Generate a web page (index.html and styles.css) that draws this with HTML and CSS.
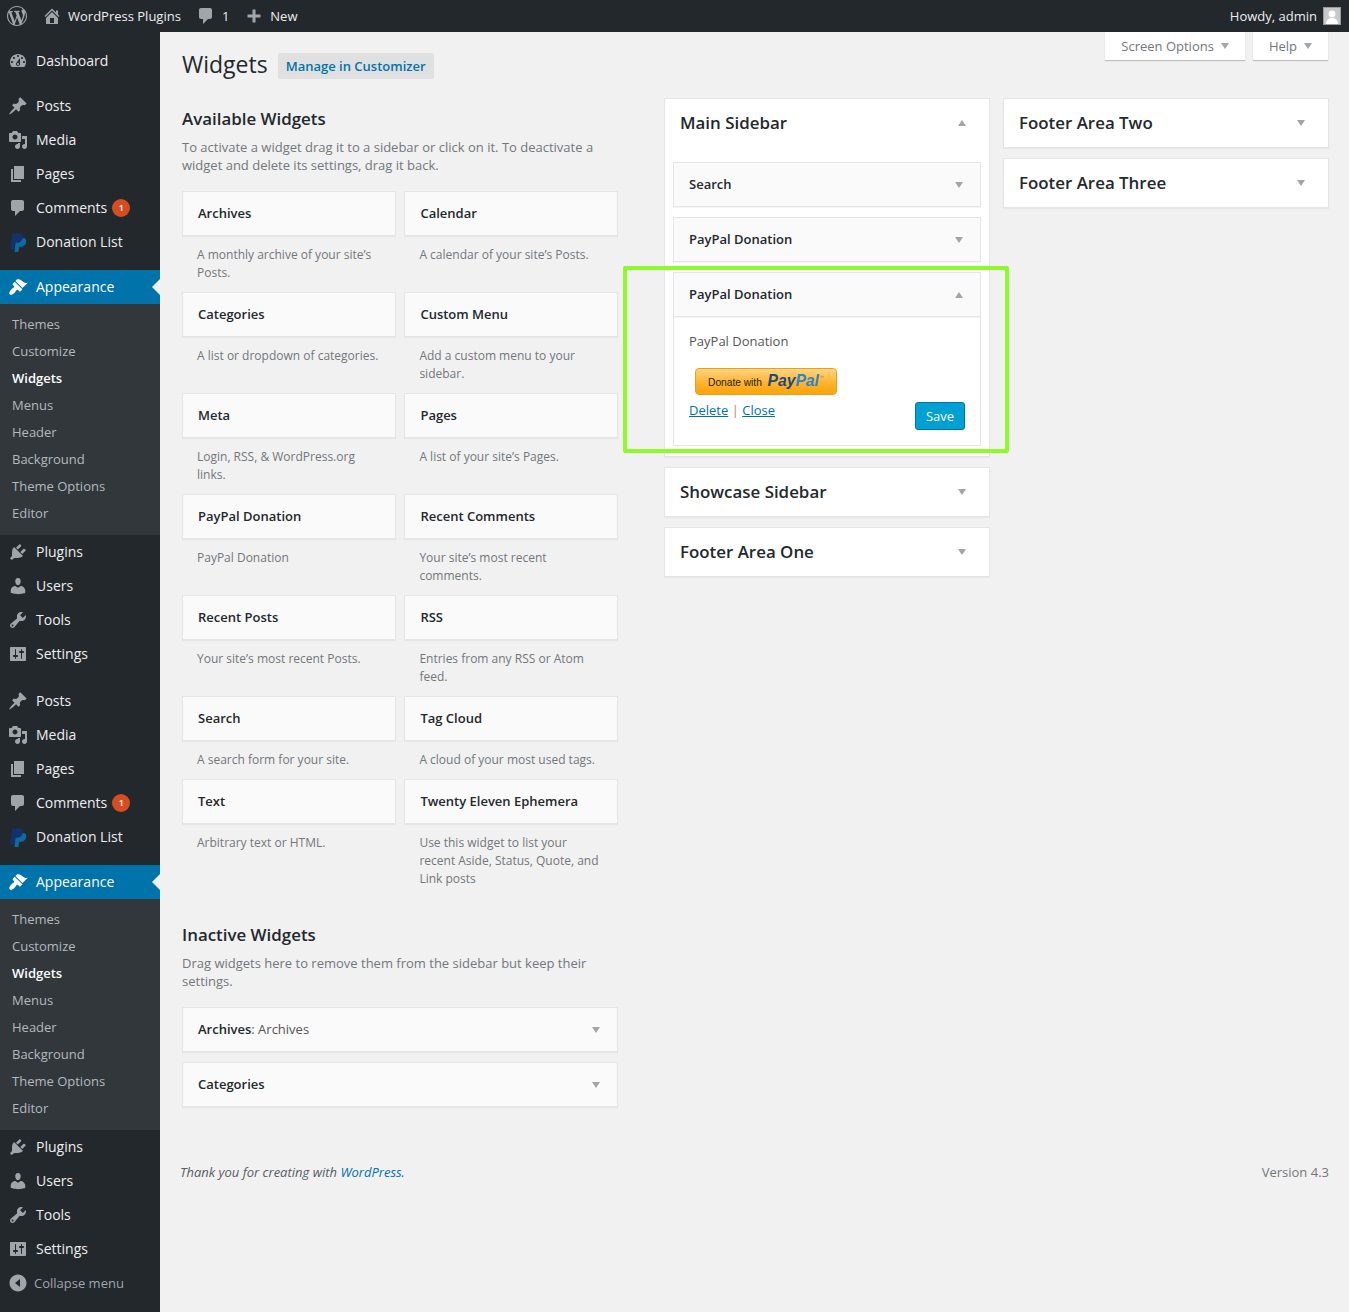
FILE: index.html
```html
<!DOCTYPE html>
<html lang="en">
<head>
    <meta charset="UTF-8">
    <meta name="viewport" content="width=device-width, initial-scale=1.0">
    <title>Widgets</title>
    <link rel="stylesheet" href="styles.css">
</head>
<body>
    <!-- Icon set -->
    <svg class="icon-defs" width="0" height="0">
        <symbol id="i-wp" viewBox="0 0 20 20"><path fill-rule="evenodd" d="M20 10c0-5.51-4.49-10-10-10C4.48 0 0 4.49 0 10c0 5.52 4.48 10 10 10 5.51 0 10-4.48 10-10zM7.78 15.37L4.37 6.22c.55-.02 1.17-.08 1.17-.08.5-.06.44-1.13-.06-1.11 0 0-1.45.11-2.37.11-.18 0-.37 0-.58-.01C4.12 2.69 6.87 1.11 10 1.11c2.33 0 4.45.87 6.05 2.34-.68-.11-1.65.39-1.65 1.58 0 .74.45 1.36.9 2.1.35.61.55 1.36.55 2.46 0 1.49-1.4 5-1.4 5l-3.03-8.37c.54-.02.82-.17.82-.17.5-.05.44-1.25-.06-1.22 0 0-1.44.12-2.38.12-.87 0-2.33-.12-2.33-.12-.5-.03-.56 1.2-.06 1.22l.92.08 1.26 3.41zM17.41 10c.24-.64.74-1.87.43-4.25.7 1.29 1.05 2.71 1.05 4.25 0 3.29-1.73 6.24-4.4 7.78.97-2.59 1.94-5.2 2.92-7.78zM6.1 18.09C3.12 16.65 1.11 13.53 1.11 10c0-1.3.23-2.48.72-3.59C3.25 10.3 4.67 14.2 6.1 18.09zm4.03-6.63l2.58 6.98c-.86.29-1.76.45-2.71.45-.79 0-1.57-.11-2.29-.33.81-2.38 1.62-4.74 2.42-7.1z"/></symbol>
        <symbol id="i-home" viewBox="0 0 20 20"><path fill-rule="evenodd" d="M16 8.5l1.53 1.53-1.06 1.06L10 4.62l-6.47 6.47-1.06-1.06L10 2.5l4 4v-2h2v4zm-6-2.46l6 5.99V18H4v-5.97zM12 17v-5H8v5h4z"/></symbol>
        <symbol id="i-comment" viewBox="0 0 20 20"><path d="M5 2h9c1.1 0 2 .9 2 2v7c0 1.1-.9 2-2 2h-2l-5 5v-5H5c-1.1 0-2-.9-2-2V4c0-1.1.9-2 2-2z"/></symbol>
        <symbol id="i-plus" viewBox="0 0 20 20"><path d="M17 7v3h-5v5H9v-5H4V7h5V2h3v5h5z" transform="translate(-.5 1.5)"/></symbol>
        <symbol id="i-dashboard" viewBox="0 0 20 20"><path fill-rule="evenodd" d="M3.76 16h12.48c1.1-1.37 1.76-3.11 1.76-5 0-4.42-3.58-8-8-8s-8 3.58-8 8c0 1.89.66 3.63 1.76 5zM10 4c.55 0 1 .45 1 1s-.45 1-1 1-1-.45-1-1 .45-1 1-1zM6 6c.55 0 1 .45 1 1s-.45 1-1 1-1-.45-1-1 .45-1 1-1zm8 0c.55 0 1 .45 1 1s-.45 1-1 1-1-.45-1-1 .45-1 1-1zm-5.37 5.55L12 7v6c0 1.1-.9 2-2 2s-2-.9-2-2c0-.57.24-1.08.63-1.45zM4 10c.55 0 1 .45 1 1s-.45 1-1 1-1-.45-1-1 .45-1 1-1zm12 0c.55 0 1 .45 1 1s-.45 1-1 1-1-.45-1-1 .45-1 1-1zm-5 3c0-.55-.45-1-1-1s-1 .45-1 1 .45 1 1 1 1-.45 1-1z"/></symbol>
        <symbol id="i-post" viewBox="0 0 20 20"><path d="M10.44 3.02l1.82-1.82 6.36 6.35-1.83 1.82c-1.05-.68-2.48-.57-3.41.36l-.75.75c-.92.93-1.04 2.35-.35 3.41l-1.83 1.82-2.41-2.41-2.8 2.79c-.42.42-3.38 2.71-3.8 2.29s1.86-3.39 2.28-3.81l2.79-2.79L4.1 9.36l1.83-1.82c1.05.69 2.48.57 3.4-.36l.75-.75c.93-.92 1.05-2.35.36-3.41z"/></symbol>
        <symbol id="i-media" viewBox="0 0 20 20"><path fill-rule="evenodd" d="M13 11V4c0-.55-.45-1-1-1h-1.67L9 1H5L3.67 3H2c-.55 0-1 .45-1 1v7c0 .55.45 1 1 1h10c.55 0 1-.45 1-1zM7 4.5c1.38 0 2.5 1.12 2.5 2.5S8.38 9.5 7 9.5 4.5 8.38 4.5 7 5.62 4.5 7 4.5zM14 6h5v10.5c0 1.38-1.12 2.5-2.5 2.5S14 17.88 14 16.5s1.12-2.5 2.5-2.5c.17 0 .34.02.5.05V9h-3V6zm-4 8.05V13h2v3.5c0 1.38-1.12 2.5-2.5 2.5S7 17.88 7 16.5 8.12 14 9.5 14c.17 0 .34.02.5.05z"/></symbol>
        <symbol id="i-page" viewBox="0 0 20 20"><path d="M6 15V2h10v13H6zm-1 1h8v2H3V5h2v11z"/></symbol>
        <symbol id="i-paypal" viewBox="0 0 20 20"><path fill="#0e6aa3" d="M8 6h6.800c2.400 0 3.900 1.600 3.400 4.200-.6 2.800-2.700 4.500-5.400 4.500h-1.600l-.8 5.300H6.500z"/><path fill="#12326e" d="M4.500 1.500h6.500c3 0 4.400 1.800 3.800 4.500-.7 3-2.900 4.800-5.800 4.800H7.400L6.300 17H1.800z"/></symbol>
        <symbol id="i-brush" viewBox="0 0 20 20"><path d="M14.480 11.060L7.410 3.990l1.500-1.500c.5-.56 2.300-.47 3.510.32 1.210.8 1.430 1.280 2.910 2.100 1.180.64 2.450 1.260 4.450.85zM14.360 12.360L6.700 4.700 4.930 6.470c-.39.39-.39 1.020 0 1.410l1.060 1.060c.39.39.39 1.030 0 1.420-.6.6-1.430 1.110-2.210 1.690-.35.26-.7.53-1.010.84-1.400 1.400-2 3.400-1 4.400 1 1 3 .4 4.400-1 .31-.31.58-.66.84-1.010.58-.78 1.090-1.610 1.690-2.210.39-.39 1.030-.39 1.420 0l1.060 1.060c.39.39 1.020.39 1.410 0z"/></symbol>
        <symbol id="i-plugin" viewBox="0 0 20 20"><path d="M13.110 4.360L9.870 7.600 8 5.730l3.240-3.240c.35-.34 1.050-.2 1.560.32.52.51.66 1.210.31 1.550zm-8 1.770l.91-1.120 9.010 9.010-1.190.84c-.71.71-2.630 1.160-3.820 1.160H6.140L4.900 17.260c-.59.59-1.540.59-2.120 0-.59-.58-.59-1.530 0-2.120l1.240-1.240v-3.880c0-1.130.4-3.190 1.090-3.890zm7.260 3.970l3.240-3.240c.34-.35 1.040-.21 1.550.31.52.51.66 1.210.31 1.550l-3.240 3.250z"/></symbol>
        <symbol id="i-users" viewBox="0 0 20 20"><path d="M10 9.250c-2.270 0-2.730-3.440-2.730-3.440C7 4.020 7.820 2 9.970 2c2.160 0 2.980 2.020 2.710 3.810 0 0-.41 3.440-2.680 3.440zm0 2.570L12.720 10c2.390 0 4.520 2.330 4.520 4.530v2.490s-3.650 1.130-7.240 1.130c-3.650 0-7.240-1.130-7.240-1.130v-2.490c0-2.250 1.940-4.480 4.470-4.480z"/></symbol>
        <symbol id="i-tools" viewBox="0 0 20 20"><path fill-rule="evenodd" d="M16.680 9.770c-1.340 1.340-3.300 1.670-4.950.99l-5.410 6.520c-.99.99-2.590.99-3.580 0s-.99-2.590 0-3.570l6.520-5.420c-.68-1.650-.35-3.610.99-4.950 1.280-1.280 3.120-1.620 4.720-1.060l-2.890 2.890 2.820 2.820 2.860-2.870c.53 1.580.18 3.390-1.080 4.650zM3.810 16.210c.4.39 1.040.39 1.430 0 .4-.4.4-1.040 0-1.430-.39-.4-1.030-.4-1.430 0-.39.39-.39 1.030 0 1.430z"/></symbol>
        <symbol id="i-settings" viewBox="0 0 20 20"><path fill-rule="evenodd" d="M18 16V4c0-.55-.45-1-1-1H3c-.55 0-1 .45-1 1v12c0 .55.45 1 1 1h14c.55 0 1-.45 1-1zM8 11h1c.55 0 1 .45 1 1s-.45 1-1 1H8v1.500c0 .28-.22.5-.5.5s-.5-.22-.5-.5V13H6c-.55 0-1-.45-1-1s.45-1 1-1h1V5.500c0-.28.22-.5.5-.5s.5.22.5.5V11zm5-2h-1c-.55 0-1-.45-1-1s.45-1 1-1h1V5.500c0-.28.22-.5.5-.5s.5.22.5.5V7h1c.55 0 1 .45 1 1s-.45 1-1 1h-1v5.500c0 .28-.22.5-.5.5s-.5-.22-.5-.5V9z"/></symbol>
        <symbol id="i-collapse" viewBox="0 0 20 20"><path fill-rule="evenodd" d="M10 1.500c4.700 0 8.500 3.800 8.500 8.500s-3.800 8.500-8.500 8.500S1.500 14.700 1.500 10 5.300 1.500 10 1.500zM12 14V6l-5 4z"/></symbol>
        <symbol id="i-avatar" viewBox="0 0 16 16"><rect width="16" height="16" fill="#c9c9c9"/><circle cx="8" cy="6" r="3.400" fill="#fff"/><path fill="#fff" d="M2 16c.3-4 2.500-6 6-6s5.700 2 6 6z"/></symbol>
    </svg>

    <!-- Admin bar -->
    <div class="adminbar">
        <div class="bar-left">
            <svg class="bar-wp"><use href="#i-wp"/></svg>
            <span class="bar-item"><svg class="bar-icon"><use href="#i-home"/></svg>WordPress Plugins</span>
            <span class="bar-item"><svg class="bar-icon"><use href="#i-comment"/></svg>1</span>
            <span class="bar-item"><svg class="bar-icon"><use href="#i-plus"/></svg>New</span>
        </div>
        <div class="bar-right">Howdy, admin <svg class="bar-avatar"><use href="#i-avatar"/></svg></div>
    </div>

    <div class="layout">
        <!-- Side menu -->
        <nav class="sidemenu">
            <a class="menu-item first"><svg class="menu-icon"><use href="#i-dashboard"/></svg>Dashboard</a>
            <div class="menu-sep"></div>
            <a class="menu-item"><svg class="menu-icon"><use href="#i-post"/></svg>Posts</a>
            <a class="menu-item"><svg class="menu-icon"><use href="#i-media"/></svg>Media</a>
            <a class="menu-item"><svg class="menu-icon"><use href="#i-page"/></svg>Pages</a>
            <a class="menu-item"><svg class="menu-icon"><use href="#i-comment"/></svg>Comments <span class="badge">1</span></a>
            <a class="menu-item"><svg class="menu-icon"><use href="#i-paypal"/></svg>Donation List</a>
            <div class="menu-sep"></div>
            <a class="menu-item current"><svg class="menu-icon"><use href="#i-brush"/></svg>Appearance</a>
            <ul class="submenu">
                <li>Themes</li>
                <li>Customize</li>
                <li class="on">Widgets</li>
                <li>Menus</li>
                <li>Header</li>
                <li>Background</li>
                <li>Theme Options</li>
                <li>Editor</li>
            </ul>
            <a class="menu-item"><svg class="menu-icon"><use href="#i-plugin"/></svg>Plugins</a>
            <a class="menu-item"><svg class="menu-icon"><use href="#i-users"/></svg>Users</a>
            <a class="menu-item"><svg class="menu-icon"><use href="#i-tools"/></svg>Tools</a>
            <a class="menu-item"><svg class="menu-icon"><use href="#i-settings"/></svg>Settings</a>
            <div class="menu-sep wide"></div>
            <a class="menu-item"><svg class="menu-icon"><use href="#i-post"/></svg>Posts</a>
            <a class="menu-item"><svg class="menu-icon"><use href="#i-media"/></svg>Media</a>
            <a class="menu-item"><svg class="menu-icon"><use href="#i-page"/></svg>Pages</a>
            <a class="menu-item"><svg class="menu-icon"><use href="#i-comment"/></svg>Comments <span class="badge">1</span></a>
            <a class="menu-item"><svg class="menu-icon"><use href="#i-paypal"/></svg>Donation List</a>
            <div class="menu-sep"></div>
            <a class="menu-item current"><svg class="menu-icon"><use href="#i-brush"/></svg>Appearance</a>
            <ul class="submenu">
                <li>Themes</li>
                <li>Customize</li>
                <li class="on">Widgets</li>
                <li>Menus</li>
                <li>Header</li>
                <li>Background</li>
                <li>Theme Options</li>
                <li>Editor</li>
            </ul>
            <a class="menu-item"><svg class="menu-icon"><use href="#i-plugin"/></svg>Plugins</a>
            <a class="menu-item"><svg class="menu-icon"><use href="#i-users"/></svg>Users</a>
            <a class="menu-item"><svg class="menu-icon"><use href="#i-tools"/></svg>Tools</a>
            <a class="menu-item"><svg class="menu-icon"><use href="#i-settings"/></svg>Settings</a>
            <a class="menu-collapse"><svg class="menu-icon"><use href="#i-collapse"/></svg>Collapse menu</a>
        </nav>

        <!-- Page content -->
        <main class="content">
            <div class="screen-tabs">
                <span class="screen-tab">Screen Options<i class="arrow down"></i></span>
                <span class="screen-tab">Help<i class="arrow down"></i></span>
            </div>

            <div class="page-title">
                <h1>Widgets</h1>
                <span class="title-action">Manage in Customizer</span>
            </div>

            <div class="columns">
                <div class="col-available">
                    <h2>Available Widgets</h2>
                    <p class="intro">To activate a widget drag it to a sidebar or click on it. To deactivate a widget and delete its settings, drag it back.</p>
                    <div class="widget-grid">
                        <div class="avail"><div class="tile">Archives</div><p>A monthly archive of your site’s Posts.</p></div>
                        <div class="avail"><div class="tile">Calendar</div><p>A calendar of your site’s Posts.</p></div>
                        <div class="avail"><div class="tile">Categories</div><p>A list or dropdown of categories.</p></div>
                        <div class="avail"><div class="tile">Custom Menu</div><p>Add a custom menu to your sidebar.</p></div>
                        <div class="avail"><div class="tile">Meta</div><p>Login, RSS, &amp; WordPress.org links.</p></div>
                        <div class="avail"><div class="tile">Pages</div><p>A list of your site’s Pages.</p></div>
                        <div class="avail"><div class="tile">PayPal Donation</div><p>PayPal Donation</p></div>
                        <div class="avail"><div class="tile">Recent Comments</div><p>Your site’s most recent comments.</p></div>
                        <div class="avail"><div class="tile">Recent Posts</div><p>Your site’s most recent Posts.</p></div>
                        <div class="avail"><div class="tile">RSS</div><p>Entries from any RSS or Atom feed.</p></div>
                        <div class="avail"><div class="tile">Search</div><p>A search form for your site.</p></div>
                        <div class="avail"><div class="tile">Tag Cloud</div><p>A cloud of your most used tags.</p></div>
                        <div class="avail"><div class="tile">Text</div><p>Arbitrary text or HTML.</p></div>
                        <div class="avail"><div class="tile">Twenty Eleven Ephemera</div><p>Use this widget to list your recent Aside, Status, Quote, and Link posts</p></div>
                    </div>

                    <h2 class="inactive-head">Inactive Widgets</h2>
                    <p class="intro">Drag widgets here to remove them from the sidebar but keep their settings.</p>
                    <div class="inactive-list">
                        <div class="tile row">Archives<span class="tile-sub">: Archives</span><i class="arrow down"></i></div>
                        <div class="tile row">Categories<i class="arrow down"></i></div>
                    </div>
                </div>

                <div class="col-sidebars">
                    <div class="sidebar-box open">
                        <h3>Main Sidebar<i class="arrow up"></i></h3>
                        <div class="tile row">Search<i class="arrow down"></i></div>
                        <div class="tile row">PayPal Donation<i class="arrow down"></i></div>
                        <div class="widget-open">
                            <div class="tile row">PayPal Donation<i class="arrow up"></i></div>
                            <div class="widget-body">
                                <p class="widget-text">PayPal Donation</p>
                                <div class="donate-btn"><span class="donate-text">Donate with</span> <span class="pp-pay">Pay</span><span class="pp-pal">Pal</span><span class="pp-tm">™</span></div>
                                <div class="widget-actions">
                                    <div class="widget-links"><a>Delete</a> <span class="pipe">|</span> <a>Close</a></div>
                                    <span class="save-btn">Save</span>
                                </div>
                            </div>
                        </div>
                        <div class="highlight"></div>
                    </div>
                    <div class="sidebar-box"><h3>Showcase Sidebar<i class="arrow down"></i></h3></div>
                    <div class="sidebar-box"><h3>Footer Area One<i class="arrow down"></i></h3></div>
                </div>

                <div class="col-sidebars second">
                    <div class="sidebar-box"><h3>Footer Area Two<i class="arrow down"></i></h3></div>
                    <div class="sidebar-box"><h3>Footer Area Three<i class="arrow down"></i></h3></div>
                </div>
            </div>

            <footer class="page-footer">
                <em>Thank you for creating with <a>WordPress</a>.</em>
                <span>Version 4.3</span>
            </footer>
        </main>
    </div>
</body>
</html>
```

FILE: styles.css
```css
body {
    margin: 0;
    background-color: #f1f1f1;
    color: #444;
    font-family: "Open Sans", sans-serif;
    font-size: 13px;
    line-height: 18px;
}
h1, h2, h3, p, ul {
    margin: 0;
    padding: 0;
}
.icon-defs {
    position: absolute;
}

/* Admin bar */
.adminbar {
    display: flex;
    justify-content: space-between;
    align-items: center;
    height: 32px;
    background-color: #23282d;
    color: #eee;
}
.bar-left, .bar-item, .bar-right {
    display: flex;
    align-items: center;
}
.bar-left {
    padding-left: 7px;
}
.bar-wp {
    width: 20px;
    height: 20px;
    margin-right: 15px;
    fill: #a0a5aa;
}
.bar-item {
    margin-right: 15px;
}
.bar-icon {
    width: 20px;
    height: 20px;
    margin-right: 6px;
    fill: #a0a5aa;
}
.bar-right {
    padding-right: 8px;
}
.bar-avatar {
    width: 18px;
    height: 18px;
    margin-left: 6px;
    box-sizing: border-box;
    border: 1px solid #999;
}

/* Side menu */
.layout {
    display: flex;
    align-items: stretch;
    min-height: 1280px;
}
.sidemenu {
    flex: none;
    width: 160px;
    background-color: #23282d;
    color: #eee;
    font-size: 14px;
}
.menu-item, .menu-collapse {
    position: relative;
    display: flex;
    align-items: center;
    height: 34px;
    padding-left: 8px;
}
.menu-item.first {
    margin-top: 12px;
}
.menu-icon {
    flex: none;
    width: 20px;
    height: 20px;
    margin-right: 8px;
    fill: #a0a5aa;
}
.menu-sep {
    height: 11px;
}
.menu-sep.wide {
    height: 13px;
}
.menu-item.current {
    background-color: #0073aa;
    color: #fff;
}
.menu-item.current .menu-icon {
    fill: #fff;
}
.menu-item.current::after {
    content: "";
    position: absolute;
    right: 0;
    top: 9px;
    border: 8px solid transparent;
    border-right-color: #f1f1f1;
    border-left-width: 0;
}
.badge {
    display: inline-block;
    width: 18px;
    height: 18px;
    margin-left: 5px;
    border-radius: 50%;
    background-color: #d54e21;
    color: #fff;
    font-size: 9px;
    font-weight: 600;
    line-height: 18px;
    text-align: center;
}
.submenu {
    padding: 7px 0 8px;
    background-color: #32373c;
    color: #b4b9be;
    font-size: 13px;
    list-style: none;
}
.submenu li {
    height: 27px;
    padding-left: 12px;
    line-height: 27px;
}
.submenu li.on {
    color: #fff;
    font-weight: 600;
}
.menu-collapse {
    color: #a0a5aa;
    font-size: 13px;
}
.menu-collapse .menu-icon {
    margin-right: 6px;
}

/* Content */
.content {
    position: relative;
    flex: 1;
    padding: 0 20px 0 22px;
}
.screen-tabs {
    position: absolute;
    top: 0;
    right: 21px;
    display: flex;
    gap: 8px;
}
.screen-tab {
    display: flex;
    align-items: center;
    height: 28px;
    padding: 0 16px;
    background-color: #fff;
    box-shadow: 0 1px 1px rgba(0, 0, 0, .2);
    color: #72777c;
}
.screen-tab .arrow {
    margin-left: 7px;
}
.arrow {
    display: inline-block;
    width: 0;
    height: 0;
    border-left: 4.5px solid transparent;
    border-right: 4.5px solid transparent;
}
.arrow.down {
    border-top: 6px solid #a0a5aa;
}
.arrow.up {
    border-bottom: 6px solid #a0a5aa;
}
.page-title {
    display: flex;
    align-items: center;
    padding-top: 18px;
}
h1 {
    color: #23282d;
    font-size: 23px;
    font-weight: 400;
    line-height: 29px;
}
.title-action {
    margin: 2px 0 0 10px;
    padding: 4px 8px;
    border-radius: 2px;
    background-color: #e0e0e0;
    color: #0073aa;
    font-weight: 600;
}
.columns {
    display: flex;
    align-items: flex-start;
    margin-top: 19px;
}
.col-available {
    flex: none;
    width: 436px;
    padding-top: 9px;
    margin-right: 46px;
}
h2 {
    color: #23282d;
    font-size: 16.9px;
    font-weight: 600;
    line-height: 24px;
}
.intro {
    margin-top: 7px;
    color: #72777c;
}
.widget-grid {
    display: grid;
    grid-template-columns: 214px 214px;
    column-gap: 8.4px;
    margin-top: 17px;
}
.avail {
    padding-bottom: 10px;
}
.avail p {
    margin-top: 10px;
    padding: 0 15px;
    color: #72777c;
    font-size: 12px;
}
.tile {
    box-sizing: border-box;
    height: 45px;
    padding: 0 15px;
    border: 1px solid #e5e5e5;
    background-color: #fafafa;
    box-shadow: 0 1px 1px rgba(0, 0, 0, .04);
    color: #23282d;
    font-weight: 600;
    line-height: 43px;
}
.tile.row {
    display: flex;
    align-items: center;
    margin-bottom: 10px;
}
.tile .arrow {
    margin-left: auto;
    margin-right: 1px;
}
.tile-sub {
    color: #555;
    font-weight: 400;
}
.inactive-head {
    margin-top: 25px;
}
.inactive-list {
    margin-top: 17px;
}
.inactive-list .arrow {
    margin-right: 2px;
}

/* Sidebars */
.col-sidebars {
    flex: none;
    width: 326px;
    margin-right: 13px;
}
.col-sidebars.second {
    margin-right: 0;
}
.sidebar-box {
    position: relative;
    margin-bottom: 10px;
    border: 1px solid #e5e5e5;
    background-color: #fff;
    box-shadow: 0 1px 1px rgba(0, 0, 0, .04);
}
.sidebar-box h3 {
    display: flex;
    align-items: center;
    justify-content: space-between;
    height: 48px;
    padding: 0 23px 0 15px;
    color: #23282d;
    font-size: 16.9px;
    font-weight: 600;
}
.sidebar-box.open {
    padding: 0 8px 10px;
}
.sidebar-box.open h3 {
    margin: 0 -8px 15px;
}
.sidebar-box.open > .tile.row {
    padding-right: 16px;
}
.widget-open .tile.row {
    margin-bottom: 0;
    padding-right: 16px;
}
.widget-body {
    box-sizing: border-box;
    height: 129px;
    padding: 15px 15px 0;
    border: 1px solid #e5e5e5;
    border-top: 0;
}
.widget-text {
    color: #555;
}
.donate-btn {
    box-sizing: border-box;
    width: 142px;
    height: 27px;
    margin: 18px 0 0 6px;
    border: 1px solid #e8a020;
    border-radius: 4px;
    background: linear-gradient(#fed582, #ffb32e 55%, #fca40a);
    font-family: "Liberation Sans", sans-serif;
    line-height: 24px;
    text-align: center;
    white-space: nowrap;
}
.donate-text {
    margin-right: 2px;
    color: #222;
    font-size: 10.2px;
}
.pp-pay, .pp-pal {
    font-size: 15.7px;
    font-style: italic;
    font-weight: 700;
}
.pp-pay {
    color: #1a4a80;
}
.pp-pal {
    color: #2a86c8;
}
.pp-tm {
    color: #9a8a6a;
    font-size: 5px;
    line-height: 1;
    vertical-align: 7px;
}
.widget-actions {
    display: flex;
    justify-content: space-between;
    align-items: flex-start;
    margin-top: 6px;
}
.widget-links a, .page-footer a {
    color: #0073aa;
}
.widget-links a {
    text-decoration: underline;
}
.pipe {
    color: #c98a3a;
}
.save-btn {
    box-sizing: border-box;
    width: 50px;
    height: 28px;
    margin: 1px 0 0;
    border: 1px solid #0073aa;
    border-radius: 3px;
    background-color: #00a0d2;
    color: #fff;
    line-height: 26px;
    text-align: center;
}
.highlight {
    position: absolute;
    left: -42px;
    top: 167px;
    width: 378px;
    height: 179px;
    border: 4px solid #90f92c;
    border-radius: 2px;
    pointer-events: none;
}

/* Footer */
.page-footer {
    display: flex;
    justify-content: space-between;
    margin: 46px 0 0 -2px;
    color: #72777c;
}
.page-footer em {
    color: #555d66;
}
```
